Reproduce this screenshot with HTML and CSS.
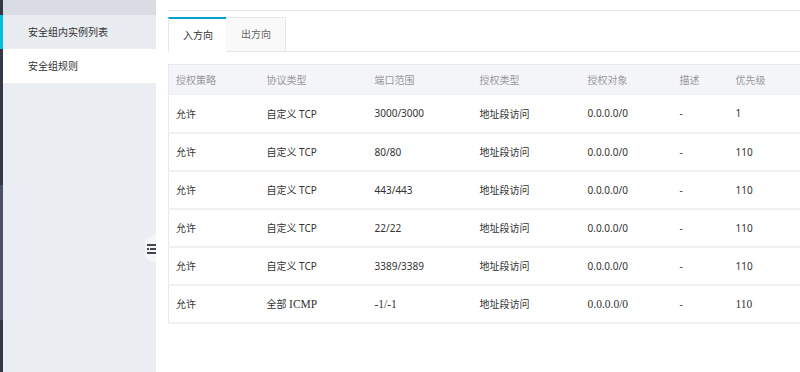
FILE: index.html
```html
<!DOCTYPE html>
<html lang="zh-CN">
<head>
<meta charset="utf-8">
<title>安全组规则</title>
<link rel="stylesheet" href="styles.css">
</head>
<body>
<div class="app">
  <div class="rail">
    <div class="rail-top"></div>
    <div class="rail-active"></div>
    <div class="rail-dark"></div>
    <div class="rail-mid"></div>
    <div class="rail-dark2"></div>
  </div>
  <aside class="sidebar">
    <div class="side-head"></div>
    <div class="side-item">安全组内实例列表</div>
    <div class="side-item current">安全组规则</div>
    <div class="collapse">
      <svg width="10" height="12" viewBox="0 0 10 12">
        <rect x="0" y="1" width="9" height="2" fill="#3e4553"/>
        <rect x="0" y="5" width="2" height="2" fill="#3e4553"/>
        <rect x="3" y="5" width="6" height="2" fill="#3e4553"/>
        <rect x="0" y="9" width="9" height="2" fill="#3e4553"/>
      </svg>
    </div>
  </aside>
  <main class="main">
    <div class="topline"></div>
    <div class="tabs">
      <div class="tab active">入方向</div>
      <div class="tab">出方向</div>
      <div class="tab-fill"></div>
    </div>
    <table class="rules">
      <colgroup>
        <col class="c1"><col class="c2"><col class="c3"><col class="c4"><col class="c5"><col class="c6"><col class="c7">
      </colgroup>
      <thead>
        <tr><th>授权策略</th><th>协议类型</th><th>端口范围</th><th>授权类型</th><th>授权对象</th><th>描述</th><th>优先级</th></tr>
      </thead>
      <tbody>
        <tr><td>允许</td><td>自定义 TCP</td><td>3000/3000</td><td>地址段访问</td><td>0.0.0.0/0</td><td>-</td><td>1</td></tr>
        <tr><td>允许</td><td>自定义 TCP</td><td>80/80</td><td>地址段访问</td><td>0.0.0.0/0</td><td>-</td><td>110</td></tr>
        <tr><td>允许</td><td>自定义 TCP</td><td>443/443</td><td>地址段访问</td><td>0.0.0.0/0</td><td>-</td><td>110</td></tr>
        <tr><td>允许</td><td>自定义 TCP</td><td>22/22</td><td>地址段访问</td><td>0.0.0.0/0</td><td>-</td><td>110</td></tr>
        <tr><td>允许</td><td>自定义 TCP</td><td>3389/3389</td><td>地址段访问</td><td>0.0.0.0/0</td><td>-</td><td>110</td></tr>
        <tr><td>允许</td><td>全部 <span class="ser">ICMP</span></td><td><span class="ser">-1/-1</span></td><td>地址段访问</td><td><span class="ser">0.0.0.0/0</span></td><td>-</td><td><span class="ser">110</span></td></tr>
      </tbody>
    </table>
  </main>
</div>
</body>
</html>
```

FILE: styles.css
```css
* { box-sizing: border-box; }
html, body { margin: 0; padding: 0; }
body {
  width: 800px;
  height: 372px;
  overflow: hidden;
  background: #fff;
  font-family: "Noto Sans", "Noto Sans CJK SC", sans-serif;
  font-size: 10px;
  color: #333;
}
.app {
  display: flex;
  height: 372px;
}
.rail {
  width: 3px;
  display: flex;
  flex-direction: column;
  flex-shrink: 0;
}
.rail-top { height: 15px; background: #343946; }
.rail-active { height: 34px; background: #00c1de; }
.rail-dark { height: 136px; background: #343946; }
.rail-mid { height: 135px; background: #4b5164; }
.rail-dark2 { flex: 1; background: #343946; }

.sidebar {
  position: relative;
  width: 153px;
  flex-shrink: 0;
  background: #eaedf1;
}
.side-head { height: 15px; background: #d9dde3; }
.side-item {
  height: 34px;
  line-height: 34px;
  padding-left: 25px;
  color: #333;
  background: #e9ecf0;
}
.side-item.current { background: #fff; }
.collapse {
  position: absolute;
  right: 0;
  top: 234px;
  width: 11px;
  height: 30px;
  background: #f4f5f7;
  clip-path: polygon(100% 0, 0 18%, 0 82%, 100% 100%);
  display: flex;
  align-items: center;
  justify-content: flex-end;
}
.collapse svg { display: block; margin-right: -1px; }

.main {
  flex: 1;
  overflow: hidden;
  padding-left: 12px;
}
.topline {
  height: 11px;
  border-bottom: 1px solid #e6e6e6;
}
.tabs {
  display: flex;
  margin-top: 6px;
  height: 35px;
}
.tab {
  height: 35px;
  line-height: 33px;
  padding: 0 14px 0 15px;
  font-size: 10px;
  color: #666;
  background: #f9f9f9;
  border: 1px solid #e6e6e6;
  border-left: none;
}
.tab.active {
  color: #333;
  background: #fff;
  padding: 0 13px 0 14px;
  border-top: 2px solid #00a3cc;
  border-left: 1px solid #e6e6e6;
  border-bottom: none;
  border-right: none;
  line-height: 32px;
}
.tab-fill {
  flex: 1;
  border-bottom: 1px solid #e6e6e6;
}
.rules {
  margin-top: 12px;
  width: 640px;
  table-layout: fixed;
  border-collapse: collapse;
  border-left: 1px solid #e6e8eb;
}
.c1 { width: 91px; }
.c2 { width: 108px; }
.c3 { width: 105px; }
.c4 { width: 108px; }
.c5 { width: 92px; }
.c6 { width: 56px; }
.c7 { width: 80px; }
.rules th {
  height: 30px;
  text-align: left;
  font-weight: normal;
  color: #999;
  background: #f4f5f8;
  padding: 0 0 0 7px;
  border-top: 1px solid #e6e8eb;
  border-bottom: 1px solid #eceef1;
}
.rules td {
  height: 38px;
  padding: 0 0 0 7px;
  color: #333;
  border-bottom: 2px solid #eff0f3;
}
.ser {
  font-family: "Liberation Serif", serif;
  font-size: 11.5px;
}
```
